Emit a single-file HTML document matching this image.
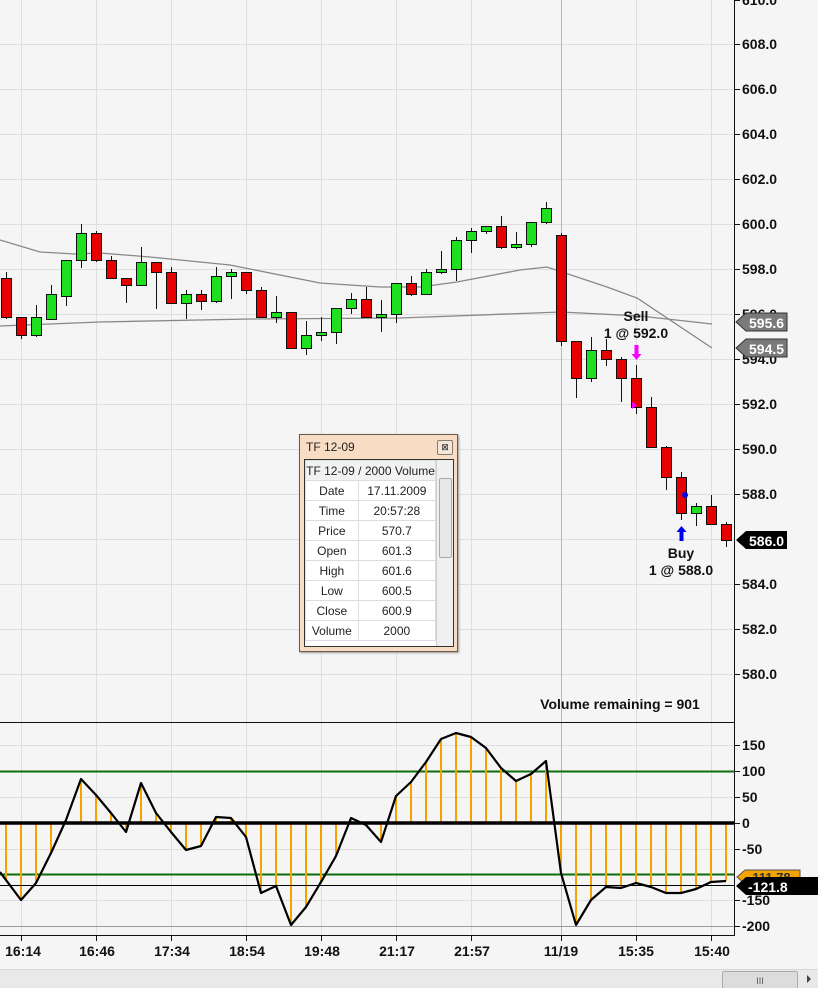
<!DOCTYPE html>
<html><head><meta charset="utf-8"><style>
html,body{margin:0;padding:0;background:#f5f5f5;}
svg{display:block;font-family:"Liberation Sans",Arial,sans-serif;}
.dlg{position:absolute;left:299px;top:434px;width:157px;height:216px;background:#f8dcc4;border:1px solid #6b5a4a;box-shadow:1px 1px 2px #999;font-family:"Liberation Sans",Arial,sans-serif;font-size:12px;color:#222;}
.dlg .tt{position:absolute;left:6px;top:5px;}
.dlg .x{position:absolute;left:137px;top:5px;width:14px;height:13px;border:1px solid #8a7a6a;background:#f4e6da;font-size:9px;text-align:center;line-height:13px;border-radius:2px;}
.tb{position:absolute;left:4px;top:24px;width:148px;height:186px;background:#fff;border:1px solid #333;overflow:hidden;}
table{border-collapse:collapse;position:absolute;left:0;top:0;width:131px;}
td{height:19px;border:1px solid #ddd;text-align:center;padding:0;font-size:12px;}
.sb{position:absolute;left:131px;top:0;width:16px;height:186px;background:#f0f0f0;border-left:1px solid #ccc;}
.th{position:absolute;left:2px;top:18px;width:11px;height:78px;background:#e8e8e8;border:1px solid #aaa;border-radius:2px;}
</style></head><body>
<svg width="818" height="988" viewBox="0 0 818 988" xmlns="http://www.w3.org/2000/svg">
<rect x="0" y="0" width="818" height="988" fill="#f5f5f5"/>
<g stroke="#dedede" stroke-width="1">
<line x1="21.5" y1="0" x2="21.5" y2="936"/><line x1="96.5" y1="0" x2="96.5" y2="936"/><line x1="171.5" y1="0" x2="171.5" y2="936"/><line x1="246.5" y1="0" x2="246.5" y2="936"/><line x1="321.5" y1="0" x2="321.5" y2="936"/><line x1="396.5" y1="0" x2="396.5" y2="936"/><line x1="471.5" y1="0" x2="471.5" y2="936"/><line x1="636.5" y1="0" x2="636.5" y2="936"/><line x1="711.5" y1="0" x2="711.5" y2="936"/>
<line x1="0" y1="44.5" x2="734" y2="44.5"/><line x1="0" y1="89.5" x2="734" y2="89.5"/><line x1="0" y1="134.5" x2="734" y2="134.5"/><line x1="0" y1="179.5" x2="734" y2="179.5"/><line x1="0" y1="224.5" x2="734" y2="224.5"/><line x1="0" y1="269.5" x2="734" y2="269.5"/><line x1="0" y1="314.5" x2="734" y2="314.5"/><line x1="0" y1="359.5" x2="734" y2="359.5"/><line x1="0" y1="404.5" x2="734" y2="404.5"/><line x1="0" y1="449.5" x2="734" y2="449.5"/><line x1="0" y1="494.5" x2="734" y2="494.5"/><line x1="0" y1="539.5" x2="734" y2="539.5"/><line x1="0" y1="584.5" x2="734" y2="584.5"/><line x1="0" y1="629.5" x2="734" y2="629.5"/><line x1="0" y1="674.5" x2="734" y2="674.5"/>
<line x1="0" y1="745.5" x2="734" y2="745.5"/><line x1="0" y1="797.5" x2="734" y2="797.5"/><line x1="0" y1="849.5" x2="734" y2="849.5"/><line x1="0" y1="900.5" x2="734" y2="900.5"/>
</g>
<line x1="561.5" y1="0" x2="561.5" y2="936" stroke="#b8b8b8"/>
<!-- MAs -->
<polyline fill="none" stroke="#888" stroke-width="1.3" points="0,240 40,252 75,254 100,253 150,257 230,265 320,283 380,287 420,287 457,282 520,270 547,267 607,287 637,298 712,348"/>
<polyline fill="none" stroke="#888" stroke-width="1.3" points="0,326 100,322 250,319 400,318 561,312 640,316 712,324"/>
<!-- candles -->
<g stroke="#111" stroke-width="1">
<line x1="6.5" y1="272" x2="6.5" y2="319"/><rect x="1.5" y="278.5" width="10" height="39" fill="#e60000"/>
<line x1="21.5" y1="317" x2="21.5" y2="339"/><rect x="16.5" y="317.5" width="10" height="18" fill="#e60000"/>
<line x1="36.5" y1="305" x2="36.5" y2="337"/><rect x="31.5" y="317.5" width="10" height="18" fill="#1fe01f"/>
<line x1="51.5" y1="285" x2="51.5" y2="319"/><rect x="46.5" y="294.5" width="10" height="25" fill="#1fe01f"/>
<line x1="66.5" y1="260" x2="66.5" y2="306"/><rect x="61.5" y="260.5" width="10" height="36" fill="#1fe01f"/>
<line x1="81.5" y1="224" x2="81.5" y2="268"/><rect x="76.5" y="233.5" width="10" height="27" fill="#1fe01f"/>
<line x1="96.5" y1="231" x2="96.5" y2="262"/><rect x="91.5" y="233.5" width="10" height="27" fill="#e60000"/>
<line x1="111.5" y1="256" x2="111.5" y2="278"/><rect x="106.5" y="260.5" width="10" height="18" fill="#e60000"/>
<line x1="126.5" y1="278" x2="126.5" y2="303"/><rect x="121.5" y="278.5" width="10" height="7" fill="#e60000"/>
<line x1="141.5" y1="247" x2="141.5" y2="285"/><rect x="136.5" y="262.5" width="10" height="23" fill="#1fe01f"/>
<line x1="156.5" y1="262" x2="156.5" y2="309"/><rect x="151.5" y="262.5" width="10" height="10" fill="#e60000"/>
<line x1="171.5" y1="267" x2="171.5" y2="303"/><rect x="166.5" y="272.5" width="10" height="31" fill="#e60000"/>
<line x1="186.5" y1="290" x2="186.5" y2="319"/><rect x="181.5" y="294.5" width="10" height="9" fill="#1fe01f"/>
<line x1="201.5" y1="290" x2="201.5" y2="310"/><rect x="196.5" y="294.5" width="10" height="7" fill="#e60000"/>
<line x1="216.5" y1="267" x2="216.5" y2="303"/><rect x="211.5" y="276.5" width="10" height="25" fill="#1fe01f"/>
<line x1="231.5" y1="269" x2="231.5" y2="299"/><rect x="226.5" y="272.5" width="10" height="4" fill="#1fe01f"/>
<line x1="246.5" y1="272" x2="246.5" y2="294"/><rect x="241.5" y="272.5" width="10" height="18" fill="#e60000"/>
<line x1="261.5" y1="287" x2="261.5" y2="317"/><rect x="256.5" y="290.5" width="10" height="27" fill="#e60000"/>
<line x1="276.5" y1="296" x2="276.5" y2="323"/><rect x="271.5" y="312.5" width="10" height="5" fill="#1fe01f"/>
<line x1="291.5" y1="312" x2="291.5" y2="348"/><rect x="286.5" y="312.5" width="10" height="36" fill="#e60000"/>
<line x1="306.5" y1="321" x2="306.5" y2="355"/><rect x="301.5" y="335.5" width="10" height="13" fill="#1fe01f"/>
<line x1="321.5" y1="317" x2="321.5" y2="341"/><rect x="316.5" y="332.5" width="10" height="3" fill="#1fe01f"/>
<line x1="336.5" y1="308" x2="336.5" y2="344"/><rect x="331.5" y="308.5" width="10" height="24" fill="#1fe01f"/>
<line x1="351.5" y1="293" x2="351.5" y2="314"/><rect x="346.5" y="299.5" width="10" height="9" fill="#1fe01f"/>
<line x1="366.5" y1="287" x2="366.5" y2="317"/><rect x="361.5" y="299.5" width="10" height="18" fill="#e60000"/>
<line x1="381.5" y1="300" x2="381.5" y2="332"/><rect x="376.5" y="314.5" width="10" height="3" fill="#1fe01f"/>
<line x1="396.5" y1="283" x2="396.5" y2="323"/><rect x="391.5" y="283.5" width="10" height="31" fill="#1fe01f"/>
<line x1="411.5" y1="276" x2="411.5" y2="296"/><rect x="406.5" y="283.5" width="10" height="11" fill="#e60000"/>
<line x1="426.5" y1="269" x2="426.5" y2="294"/><rect x="421.5" y="272.5" width="10" height="22" fill="#1fe01f"/>
<line x1="441.5" y1="251" x2="441.5" y2="274"/><rect x="436.5" y="269.5" width="10" height="3" fill="#1fe01f"/>
<line x1="456.5" y1="237" x2="456.5" y2="281"/><rect x="451.5" y="240.5" width="10" height="29" fill="#1fe01f"/>
<line x1="471.5" y1="228" x2="471.5" y2="253"/><rect x="466.5" y="231.5" width="10" height="9" fill="#1fe01f"/>
<line x1="486.5" y1="226" x2="486.5" y2="234"/><rect x="481.5" y="226.5" width="10" height="5" fill="#1fe01f"/>
<line x1="501.5" y1="216" x2="501.5" y2="249"/><rect x="496.5" y="226.5" width="10" height="21" fill="#e60000"/>
<line x1="516.5" y1="232" x2="516.5" y2="249"/><rect x="511.5" y="244.5" width="10" height="3" fill="#1fe01f"/>
<line x1="531.5" y1="222" x2="531.5" y2="247"/><rect x="526.5" y="222.5" width="10" height="22" fill="#1fe01f"/>
<line x1="546.5" y1="202" x2="546.5" y2="224"/><rect x="541.5" y="208.5" width="10" height="14" fill="#1fe01f"/>
<line x1="561.5" y1="233" x2="561.5" y2="346"/><rect x="556.5" y="235.5" width="10" height="106" fill="#e60000"/>
<line x1="576.5" y1="341" x2="576.5" y2="398"/><rect x="571.5" y="341.5" width="10" height="37" fill="#e60000"/>
<line x1="591.5" y1="337" x2="591.5" y2="382"/><rect x="586.5" y="350.5" width="10" height="28" fill="#1fe01f"/>
<line x1="606.5" y1="339" x2="606.5" y2="366"/><rect x="601.5" y="350.5" width="10" height="9" fill="#e60000"/>
<line x1="621.5" y1="357" x2="621.5" y2="402"/><rect x="616.5" y="359.5" width="10" height="19" fill="#e60000"/>
<line x1="636.5" y1="365" x2="636.5" y2="414"/><rect x="631.5" y="378.5" width="10" height="29" fill="#e60000"/>
<line x1="651.5" y1="397" x2="651.5" y2="447"/><rect x="646.5" y="407.5" width="10" height="40" fill="#e60000"/>
<line x1="666.5" y1="446" x2="666.5" y2="490"/><rect x="661.5" y="447.5" width="10" height="30" fill="#e60000"/>
<line x1="681.5" y1="472" x2="681.5" y2="520"/><rect x="676.5" y="477.5" width="10" height="36" fill="#e60000"/>
<line x1="696.5" y1="503" x2="696.5" y2="526"/><rect x="691.5" y="506.5" width="10" height="7" fill="#1fe01f"/>
<line x1="711.5" y1="495" x2="711.5" y2="524"/><rect x="706.5" y="506.5" width="10" height="18" fill="#e60000"/>
<line x1="726.5" y1="522" x2="726.5" y2="547"/><rect x="721.5" y="524.5" width="10" height="16" fill="#e60000"/>
</g>
<path d="M632,402 L637,405 L632,409Z" fill="#ff00ff"/>
<circle cx="685" cy="495" r="3" fill="#0000ee"/>
<!-- annotations -->
<g font-weight="bold" font-size="14" fill="#111" text-anchor="middle">
<text x="636" y="321">Sell</text><text x="636" y="338">1 @ 592.0</text>
<text x="681" y="558">Buy</text><text x="681" y="575">1 @ 588.0</text>
<text x="620" y="709">Volume remaining = 901</text>
</g>
<path d="M634.5,345 h4 v9 h3 l-5,6 l-5,-6 h3z" fill="#ff00ff"/>
<path d="M679.5,541 h4 v-9 h3 l-5,-6 l-5,6 h3z" fill="#0000ee"/>
<!-- axis -->
<line x1="734.5" y1="0" x2="734.5" y2="936" stroke="#111"/>
<line x1="0" y1="722.5" x2="734" y2="722.5" stroke="#111"/>
<g stroke="#111"><line x1="734" y1="0.5" x2="740" y2="0.5"/><line x1="734" y1="44.5" x2="740" y2="44.5"/><line x1="734" y1="89.5" x2="740" y2="89.5"/><line x1="734" y1="134.5" x2="740" y2="134.5"/><line x1="734" y1="179.5" x2="740" y2="179.5"/><line x1="734" y1="224.5" x2="740" y2="224.5"/><line x1="734" y1="269.5" x2="740" y2="269.5"/><line x1="734" y1="314.5" x2="740" y2="314.5"/><line x1="734" y1="359.5" x2="740" y2="359.5"/><line x1="734" y1="404.5" x2="740" y2="404.5"/><line x1="734" y1="449.5" x2="740" y2="449.5"/><line x1="734" y1="494.5" x2="740" y2="494.5"/><line x1="734" y1="584.5" x2="740" y2="584.5"/><line x1="734" y1="629.5" x2="740" y2="629.5"/><line x1="734" y1="674.5" x2="740" y2="674.5"/>
<line x1="734" y1="745.5" x2="740" y2="745.5"/><line x1="734" y1="771.5" x2="740" y2="771.5"/><line x1="734" y1="797.5" x2="740" y2="797.5"/><line x1="734" y1="823.5" x2="740" y2="823.5"/><line x1="734" y1="849.5" x2="740" y2="849.5"/><line x1="734" y1="900.5" x2="740" y2="900.5"/><line x1="734" y1="926.5" x2="740" y2="926.5"/></g>
<g font-weight="bold" font-size="14" fill="#111">
<text x="742" y="5">610.0</text><text x="742" y="49">608.0</text><text x="742" y="94">606.0</text><text x="742" y="139">604.0</text><text x="742" y="184">602.0</text><text x="742" y="229">600.0</text><text x="742" y="274">598.0</text><text x="742" y="319">596.0</text><text x="742" y="364">594.0</text><text x="742" y="409">592.0</text><text x="742" y="454">590.0</text><text x="742" y="499">588.0</text><text x="742" y="589">584.0</text><text x="742" y="634">582.0</text><text x="742" y="679">580.0</text>
<text x="742" y="750">150</text><text x="742" y="776">100</text><text x="742" y="802">50</text><text x="742" y="828">0</text><text x="742" y="854">-50</text><text x="742" y="905">-150</text><text x="742" y="931">-200</text>
</g>
<path d="M736,322 L746,313 H787 V331 H746Z" fill="#7a7a7a" stroke="#333"/>
<text x="749" y="328" font-weight="bold" font-size="14" fill="#fff">595.6</text>
<path d="M736,348 L746,339 H787 V357 H746Z" fill="#7a7a7a" stroke="#333"/>
<text x="749" y="354" font-weight="bold" font-size="14" fill="#fff">594.5</text>
<path d="M736,540 L746,531 H787 V549 H746Z" fill="#000"/>
<text x="749" y="546" font-weight="bold" font-size="14" fill="#fff">586.0</text>
<!-- indicator -->
<line x1="0" y1="771.5" x2="734" y2="771.5" stroke="#0a6e0a" stroke-width="2"/>
<line x1="0" y1="874.5" x2="734" y2="874.5" stroke="#0a6e0a" stroke-width="2"/>
<line x1="0" y1="926.5" x2="734" y2="926.5" stroke="#999"/>
<g stroke="#f5a300" stroke-width="2">
<line x1="6" y1="823" x2="6" y2="880"/><line x1="21" y1="823" x2="21" y2="900"/><line x1="36" y1="823" x2="36" y2="883"/><line x1="51" y1="823" x2="51" y2="853"/><line x1="66" y1="823" x2="66" y2="820"/><line x1="81" y1="823" x2="81" y2="779"/><line x1="96" y1="823" x2="96" y2="795"/><line x1="111" y1="823" x2="111" y2="813"/><line x1="126" y1="823" x2="126" y2="832"/><line x1="141" y1="823" x2="141" y2="783"/><line x1="156" y1="823" x2="156" y2="813"/><line x1="171" y1="823" x2="171" y2="832"/><line x1="186" y1="823" x2="186" y2="850"/><line x1="201" y1="823" x2="201" y2="846"/><line x1="216" y1="823" x2="216" y2="817"/><line x1="231" y1="823" x2="231" y2="818"/><line x1="246" y1="823" x2="246" y2="837"/><line x1="261" y1="823" x2="261" y2="893"/><line x1="276" y1="823" x2="276" y2="886"/><line x1="291" y1="823" x2="291" y2="925"/><line x1="306" y1="823" x2="306" y2="907"/><line x1="321" y1="823" x2="321" y2="882"/><line x1="336" y1="823" x2="336" y2="856"/><line x1="351" y1="823" x2="351" y2="818"/><line x1="366" y1="823" x2="366" y2="825"/><line x1="381" y1="823" x2="381" y2="842"/><line x1="396" y1="823" x2="396" y2="796"/><line x1="411" y1="823" x2="411" y2="782"/><line x1="426" y1="823" x2="426" y2="762"/><line x1="441" y1="823" x2="441" y2="739"/><line x1="456" y1="823" x2="456" y2="733"/><line x1="471" y1="823" x2="471" y2="737"/><line x1="486" y1="823" x2="486" y2="748"/><line x1="501" y1="823" x2="501" y2="768"/><line x1="516" y1="823" x2="516" y2="781"/><line x1="531" y1="823" x2="531" y2="774"/><line x1="546" y1="823" x2="546" y2="761"/><line x1="561" y1="823" x2="561" y2="873"/><line x1="576" y1="823" x2="576" y2="925"/><line x1="591" y1="823" x2="591" y2="900"/><line x1="606" y1="823" x2="606" y2="887"/><line x1="621" y1="823" x2="621" y2="888"/><line x1="636" y1="823" x2="636" y2="883"/><line x1="651" y1="823" x2="651" y2="887"/><line x1="666" y1="823" x2="666" y2="893"/><line x1="681" y1="823" x2="681" y2="893"/><line x1="696" y1="823" x2="696" y2="889"/><line x1="711" y1="823" x2="711" y2="882"/><line x1="726" y1="823" x2="726" y2="881"/>
</g>
<line x1="0" y1="823" x2="734" y2="823" stroke="#000" stroke-width="3.5"/>
<line x1="0" y1="885.5" x2="734" y2="885.5" stroke="#000"/>
<polyline fill="none" stroke="#000" stroke-width="2.2" stroke-linejoin="round" points="0,872 21,900 36,883 51,853 66,820 81,779 96,795 111,813 126,832 141,783 156,813 171,832 186,850 201,846 216,817 231,818 246,837 261,893 276,886 291,925 306,907 321,882 336,856 351,818 366,825 381,842 396,796 411,782 426,762 441,739 456,733 471,737 486,748 501,768 516,781 531,774 546,761 561,873 576,925 591,900 606,887 621,888 636,883 651,887 666,893 681,893 696,889 711,882 726,881"/>
<path d="M737,877 L745,870 H800 V884 H745Z" fill="#f5a300" stroke="#555"/>
<text x="748" y="882" font-weight="bold" font-size="13" fill="#333">-111.78</text>
<path d="M736,886 L746,877 H818 V895 H746Z" fill="#000"/>
<text x="748" y="892" font-weight="bold" font-size="14" fill="#fff">-121.8</text>
<line x1="0" y1="935.5" x2="735" y2="935.5" stroke="#111"/>
<g stroke="#111"><line x1="21.5" y1="936" x2="21.5" y2="941"/><line x1="96.5" y1="936" x2="96.5" y2="941"/><line x1="171.5" y1="936" x2="171.5" y2="941"/><line x1="246.5" y1="936" x2="246.5" y2="941"/><line x1="321.5" y1="936" x2="321.5" y2="941"/><line x1="396.5" y1="936" x2="396.5" y2="941"/><line x1="471.5" y1="936" x2="471.5" y2="941"/><line x1="561.5" y1="936" x2="561.5" y2="941"/><line x1="636.5" y1="936" x2="636.5" y2="941"/><line x1="711.5" y1="936" x2="711.5" y2="941"/></g>
<g font-weight="bold" font-size="14" fill="#111" text-anchor="middle">
<text x="23" y="956">16:14</text><text x="97" y="956">16:46</text><text x="172" y="956">17:34</text><text x="247" y="956">18:54</text><text x="322" y="956">19:48</text><text x="397" y="956">21:17</text><text x="472" y="956">21:57</text><text x="561" y="956">11/19</text><text x="636" y="956">15:35</text><text x="712" y="956">15:40</text>
</g>
<!-- scrollbar -->
<rect x="0" y="969" width="818" height="19" fill="#e9e9e9"/>
<line x1="0" y1="969.5" x2="818" y2="969.5" stroke="#d8d8d8"/>
<rect x="722.5" y="971.5" width="75" height="17" rx="2" fill="#dcdcdc" stroke="#aaa"/>
<text x="760" y="984" font-size="9" text-anchor="middle" fill="#555">III</text>
<path d="M807,975 L811,979 L807,983Z" fill="#444"/>
</svg>
<div class="dlg">
<div class="tt">TF 12-09</div><div class="x">⊠</div>
<div class="tb">
<table>
<tr><td colspan="2" style="background:#f2f2f2">TF 12-09 / 2000 Volume</td></tr>
<tr><td>Date</td><td>17.11.2009</td></tr>
<tr><td>Time</td><td>20:57:28</td></tr>
<tr><td>Price</td><td>570.7</td></tr>
<tr><td>Open</td><td>601.3</td></tr>
<tr><td>High</td><td>601.6</td></tr>
<tr><td>Low</td><td>600.5</td></tr>
<tr><td>Close</td><td>600.9</td></tr>
<tr><td>Volume</td><td>2000</td></tr>
</table>
<div class="sb"><div class="th"></div></div>
</div>
</div>
</body></html>
